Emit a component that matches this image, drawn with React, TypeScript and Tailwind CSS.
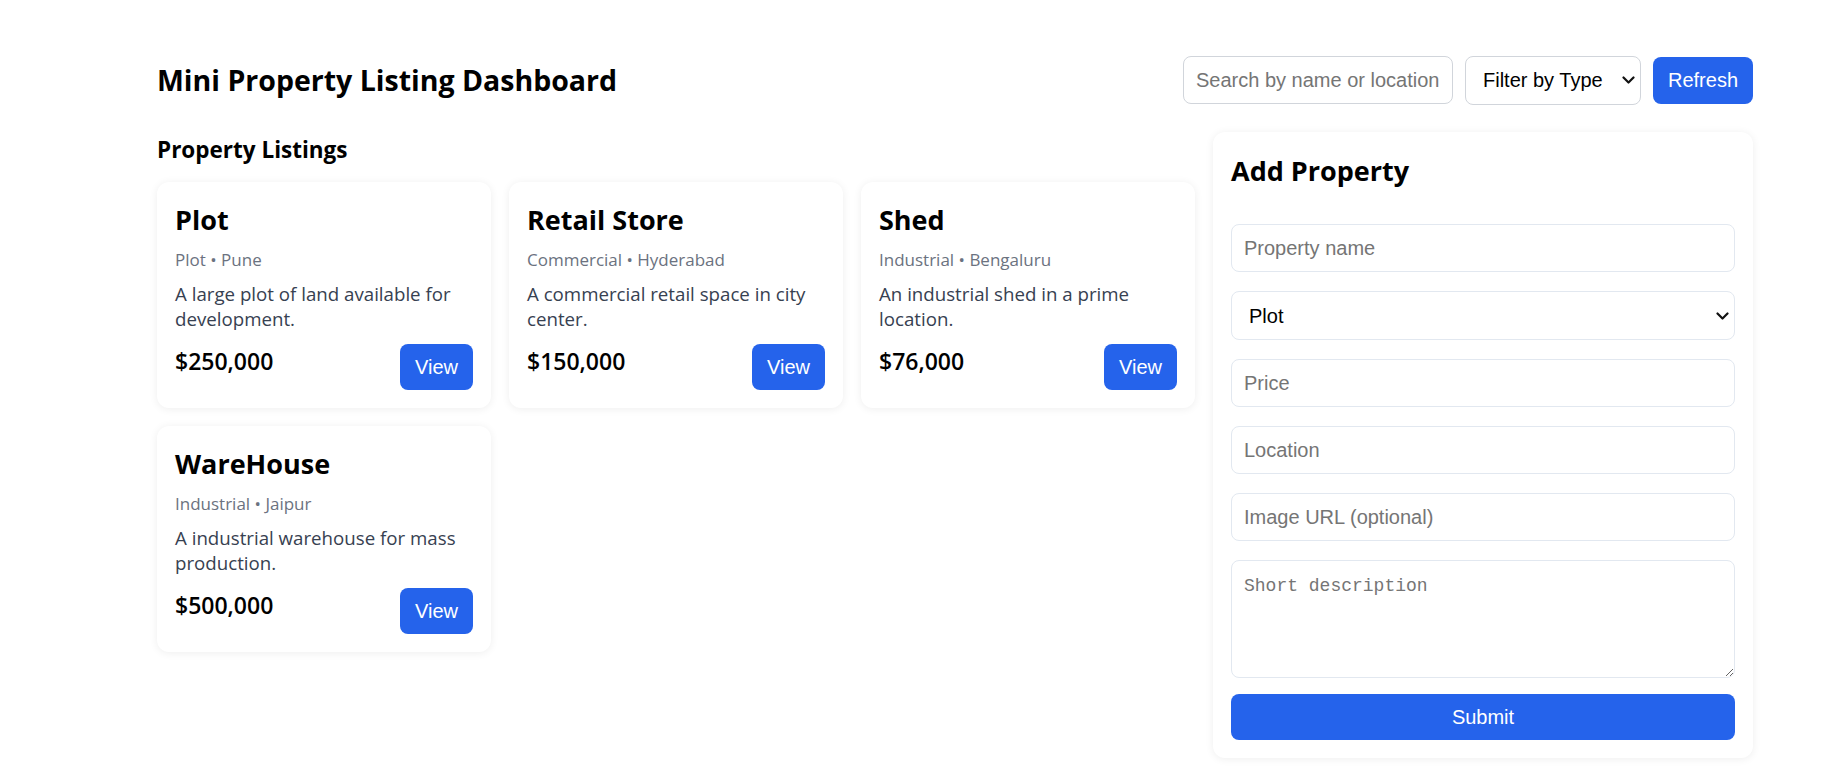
import React from "react";

type Property = {
  name: string;
  type: string;
  location: string;
  description: string;
  price: string;
};

const PROPERTIES: Property[] = [
  { name: "Plot", type: "Plot", location: "Pune", description: "A large plot of land available for development.", price: "$250,000" },
  { name: "Retail Store", type: "Commercial", location: "Hyderabad", description: "A commercial retail space in city center.", price: "$150,000" },
  { name: "Shed", type: "Industrial", location: "Bengaluru", description: "An industrial shed in a prime location.", price: "$76,000" },
  { name: "WareHouse", type: "Industrial", location: "Jaipur", description: "A industrial warehouse for mass production.", price: "$500,000" },
];

function Chevron() {
  return (
    <svg width="13" height="8" viewBox="0 0 13 8" fill="none" className="pointer-events-none absolute right-[6px] top-1/2 -translate-y-1/2">
      <path d="M1.5 1.5L6.5 6.5L11.5 1.5" stroke="#111" strokeWidth="2.2" strokeLinecap="round" strokeLinejoin="round" />
    </svg>
  );
}

function PropertyCard({ p }: { p: Property }) {
  return (
    <div className="rounded-xl bg-white px-[18px] pt-[19px] pb-[18px] shadow-[0_1px_8px_rgba(0,0,0,0.07)]">
      <h3 className="text-[27px] leading-[38px] font-bold text-black">{p.name}</h3>
      <p className="mt-[9px] text-[17px] leading-[23px] text-[#6b7280]">
        {p.type} • {p.location}
      </p>
      <p className="mt-[10px] text-[18.7px] leading-[25px] text-[#374151]">{p.description}</p>
      <div className="mt-[13px] flex items-start justify-between">
        <span className="text-[23px] leading-[34px] font-semibold text-black">{p.price}</span>
        <button className="h-[46px] rounded-lg bg-[#2563eb] px-[15px] font-['Liberation_Sans',Arial,sans-serif] text-[20px] text-white">
          View
        </button>
      </div>
    </div>
  );
}

const fieldCls =
  "h-[48px] w-full rounded-lg border border-[#e2e8f0] bg-white px-[12px] font-['Liberation_Sans',Arial,sans-serif] text-[20px] text-black placeholder:text-[#757575] outline-none";

export default function App() {
  return (
    <div className="min-h-screen bg-white pl-[157px] pr-[80px] pt-[56px] font-['Open_Sans',sans-serif] text-black">
      <header className="flex h-[48px] items-center justify-between">
        <h1 className="text-[28.5px] leading-[38px] font-bold">Mini Property Listing Dashboard</h1>
        <div className="flex items-center gap-3">
          <input
            placeholder="Search by name or location"
            className="h-[48px] w-[270px] rounded-lg border border-[#d1d5db] bg-white px-[12px] font-['Liberation_Sans',Arial,sans-serif] text-[20px] placeholder:text-[#757575] outline-none"
          />
          <div className="relative">
            <select className="h-[49px] w-[176px] appearance-none rounded-lg border border-[#d1d5db] bg-white pl-[17px] font-['Liberation_Sans',Arial,sans-serif] text-[20px] text-black outline-none">
              <option>Filter by Type</option>
              <option>Plot</option>
              <option>Commercial</option>
              <option>Industrial</option>
            </select>
            <Chevron />
          </div>
          <button className="h-[47px] w-[100px] rounded-lg bg-[#2563eb] font-['Liberation_Sans',Arial,sans-serif] text-[20px] text-white">
            Refresh
          </button>
        </div>
      </header>

      <div className="mt-[28px] flex items-start gap-[18px]">
        <section className="flex-1">
          <h2 className="mt-[3px] text-[22.5px] leading-[30px] font-bold">Property Listings</h2>
          <div className="mt-[17px] grid grid-cols-3 gap-x-[18px] gap-y-[18px]">
            {PROPERTIES.map((p) => (
              <PropertyCard key={p.name} p={p} />
            ))}
          </div>
        </section>

        <aside className="w-[540px] rounded-xl bg-white p-[18px] shadow-[0_1px_8px_rgba(0,0,0,0.07)]">
          <h2 className="text-[27px] leading-[41px] font-bold">Add Property</h2>
          <form className="mt-[33px] flex flex-col" onSubmit={(e) => e.preventDefault()}>
            <div className="flex flex-col gap-[19px]">
              <input placeholder="Property name" className={fieldCls} />
              <div className="relative">
                <select className={fieldCls + " h-[49px] appearance-none pl-[17px]"}>
                  <option>Plot</option>
                  <option>Commercial</option>
                  <option>Industrial</option>
                </select>
                <Chevron />
              </div>
              <input placeholder="Price" className={fieldCls} />
              <input placeholder="Location" className={fieldCls} />
              <input placeholder="Image URL (optional)" className={fieldCls} />
              <textarea
                placeholder="Short description"
                className="block h-[118px] w-full rounded-lg border border-[#e2e8f0] bg-white px-[12px] pt-[13px] font-['Liberation_Mono',monospace] text-[18px] leading-[24px] placeholder:text-[#757575] outline-none"
              />
            </div>
            <button
              type="submit"
              className="mt-[16px] h-[46px] w-full rounded-lg bg-[#2563eb] font-['Liberation_Sans',Arial,sans-serif] text-[20px] text-white"
            >
              Submit
            </button>
          </form>
        </aside>
      </div>
    </div>
  );
}
